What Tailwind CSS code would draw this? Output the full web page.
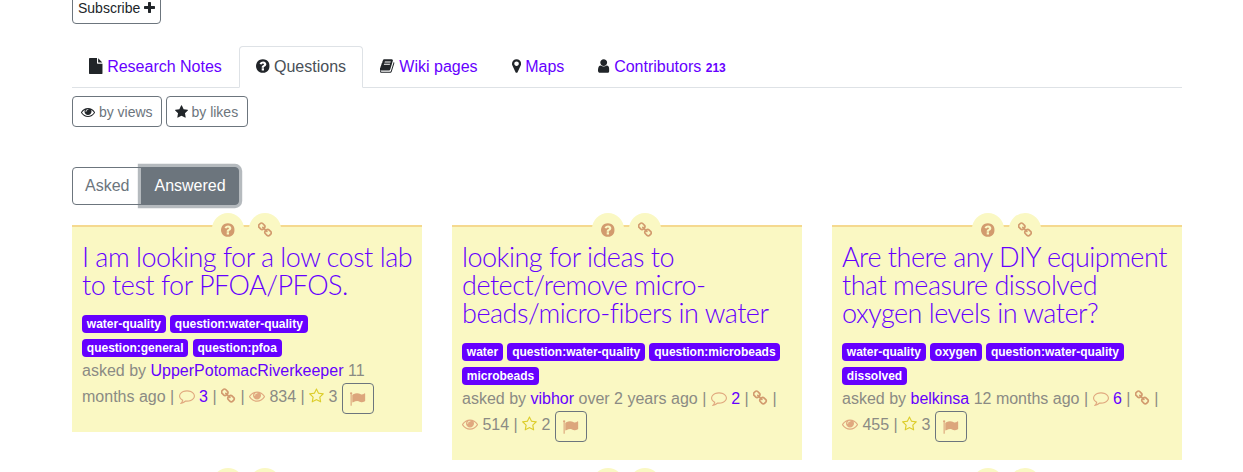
<!DOCTYPE html>
<html lang="en">
<head>
    <meta charset="UTF-8">
    <title>Questions</title>
    <script src="https://cdn.jsdelivr.net/npm/@tailwindcss/browser@4"></script>
</head>
<body class="h-[472px] overflow-hidden bg-white font-['Liberation_Sans',sans-serif] text-base leading-6 text-[#212529]">
    <svg class="hidden">
        <symbol id="i-plus" viewBox="192 0 1408 1792"><path d="M1600 736v192q0 40-28 68t-68 28h-416v416q0 40-28 68t-68 28h-192q-40 0-68-28t-28-68v-416h-416q-40 0-68-28t-28-68v-192q0-40 28-68t68-28h416v-416q0-40 28-68t68-28h192q40 0 68 28t28 68v416h416q40 0 68 28t28 68z"/></symbol>
        <symbol id="i-file" viewBox="128 0 1536 1792"><path d="M1152 512v-472q22 14 36 28l408 408q14 14 28 36h-472zm-128 32q0 40 28 68t68 28h544v1056q0 40-28 68t-68 28h-1344q-40 0-68-28t-28-68v-1600q0-40 28-68t68-28h800v544z"/></symbol>
        <symbol id="i-question" viewBox="128 0 1536 1792"><path d="M1024 1376v-192q0-14-9-23t-23-9h-192q-14 0-23 9t-9 23v192q0 14 9 23t23 9h192q14 0 23-9t9-23zm256-672q0-88-55.5-163t-138.5-116-170-41q-243 0-371 213-15 24 8 42l132 100q7 6 19 6 16 0 25-12 53-68 86-92 34-24 86-24 48 0 85.5 26t37.5 59q0 38-20 61t-68 45q-63 28-115.5 86.5t-52.5 125.5v36q0 14 9 23t23 9h192q14 0 23-9t9-23q0-19 21.5-49.5t54.5-49.5q32-18 49-28.5t46-35 44.5-48 28-60.5 12.5-81zm384 192q0 209-103 385.5t-279.5 279.5-385.5 103-385.5-103-279.5-279.5-103-385.5 103-385.5 279.5-279.5 385.5-103 385.5 103 279.5 279.5 103 385.5z"/></symbol>
        <symbol id="i-book" viewBox="64 0 1664 1792"><path d="M1639 478q40 57 18 129l-275 906q-19 64-76.5 107.5t-122.5 43.5h-923q-77 0-148.5-53.5t-99.5-131.5q-24-67-2-127 0-4 3-27t4-37q1-8-3-21.5t-3-19.5q2-11 8-21t16.5-23.5 16.5-23.5q23-38 45-91.5t30-91.5q3-10 .5-30t-.5-28q3-11 17-28t17-23q21-36 42-92t25-90q1-9-2.5-32t.5-28q4-13 22-30.5t22-22.5q19-26 42.5-84.5t27.5-96.5q1-8-3-25.5t-2-26.5q2-8 9-18t18-23 17-21q8-12 16.5-30.5t15-35 16-36 19.5-32 26.5-23.5 36-11.5 47.5 5.5l-1 3q38-9 51-9h761q74 0 114 56t18 130l-274 906q-36 119-71.5 153.5t-128.5 34.5h-869q-27 0-38 15-11 16-1 43 24 70 144 70h923q29 0 56-15.5t35-41.5l300-987q7-22 5-57 38 15 59 43zm-1064 2q-4 13 2 22.5t20 9.5h608q13 0 25.5-9.5t16.5-22.5l21-64q4-13-2-22.5t-20-9.5h-608q-13 0-25.5 9.5t-16.5 22.5zm-83 256q-4 13 2 22.5t20 9.5h608q13 0 25.5-9.5t16.5-22.5l21-64q4-13-2-22.5t-20-9.5h-608q-13 0-25.5 9.5t-16.5 22.5z"/></symbol>
        <symbol id="i-marker" viewBox="0 0 1024 1792"><path d="M768 640q0-106-75-181t-181-75-181 75-75 181 75 181 181 75 181-75 75-181zm256 0q0 109-33 179l-364 774q-16 33-47.5 52t-67.5 19-67.5-19-46.5-52l-365-774q-33-70-33-179 0-212 150-362t362-150 362 150 150 362z"/></symbol>
        <symbol id="i-user" viewBox="256 0 1280 1792"><path d="M1536 1399q0 109-62.5 187t-150.5 78h-854q-88 0-150.5-78t-62.5-187q0-85 8.5-160.5t31.5-152 58.5-131 94-89 134.5-34.5q131 128 313 128t313-128q76 0 134.5 34.5t94 89 58.5 131 31.5 152 8.5 160.5zm-256-887q0 159-112.5 271.5t-271.5 112.5-271.5-112.5-112.5-271.5 112.5-271.5 271.5-112.5 271.5 112.5 112.5 271.5z"/></symbol>
        <symbol id="i-eye" viewBox="0 0 1792 1792"><path d="M1664 960q-152-236-381-353 61 104 61 225 0 185-131.5 316.5t-316.5 131.5-316.5-131.5-131.5-316.5q0-121 61-225-229 117-381 353 133 205 333.5 326.5t434.5 121.5 434.5-121.5 333.5-326.5zm-720-384q0-20-14-34t-34-14q-125 0-214.5 89.5t-89.5 214.5q0 20 14 34t34 14 34-14 14-34q0-86 61-147t147-61q20 0 34-14t14-34zm848 384q0 34-20 69-140 230-376.5 368.5t-499.5 138.5-499.5-139-376.5-368q-20-35-20-69t20-69q140-229 376.5-368t499.5-139 499.5 139 376.5 368q20 35 20 69z"/></symbol>
        <symbol id="i-star" viewBox="64 0 1664 1792"><path d="M1728 647q0 22-26 48l-363 354 86 500q1 7 1 20 0 21-10.5 35.5t-30.5 14.5q-19 0-40-12l-449-236-449 236q-22 12-40 12-21 0-31.5-14.5t-10.5-35.5q0-6 2-20l86-500-364-354q-25-27-25-48 0-37 56-46l502-73 225-455q19-41 49-41t49 41l225 455 502 73q56 9 56 46z"/></symbol>
        <symbol id="i-star-o" viewBox="64 0 1664 1792"><path d="M1201 1004l306-297-422-62-189-382-189 382-422 62 306 297-73 421 378-199 377 199zm527-357q0 22-26 48l-363 354 86 500q1 7 1 20 0 50-41 50-19 0-40-12l-449-236-449 236q-22 12-40 12-21 0-31.5-14.5t-10.5-35.5q0-6 2-20l86-500-364-354q-25-27-25-48 0-37 56-46l502-73 225-455q19-41 49-41t49 41l225 455 502 73q56 9 56 46z"/></symbol>
        <symbol id="i-comment" viewBox="0 0 1792 1792"><path d="M896 384q-204 0-381.5 69.5t-282 187.5-104.5 255q0 112 71.5 213.5t201.5 175.5l87 50-27 96q-24 91-70 172 152-63 275-171l43-38 57 6q69 8 130 8 204 0 381.5-69.5t282-187.5 104.5-255-104.5-255-282-187.5-381.5-69.5zm896 512q0 174-120 321.5t-326 233-450 85.5q-70 0-145-8-198 175-460 242-49 14-114 22h-5q-15 0-27-10.5t-16-27.5v-1q-3-4-.5-12t2-10 4.5-9.5l6-9 7-8.5 8-9q7-8 31-34.5t34.5-38 31-39.5 32.5-51 27-59 26-76q-157-89-247.5-220t-90.5-281q0-174 120-321.5t326-233 450-85.5 450 85.5 326 233 120 321.5z"/></symbol>
        <symbol id="i-chain" viewBox="64 0 1664 1792"><path d="M1456 1216q0-40-28-68l-208-208q-28-28-68-28-42 0-72 32 3 3 19 18.5t21.5 21.5 15 19 13 25.5 3.5 27.5q0 40-28 68t-68 28q-15 0-27.5-3.5t-25.5-13-19-15-21.5-21.5-18.5-19q-33 31-33 73 0 40 28 68l206 207q27 27 68 27 40 0 68-26l147-146q28-28 28-67zm-703-705q0-40-28-68l-206-207q-28-28-68-28-39 0-68 27l-147 146q-28 28-28 67 0 40 28 68l208 208q27 27 68 27 42 0 72-31-3-3-19-18.5t-21.5-21.5-15-19-13-25.5-3.5-27.5q0-40 28-68t68-28q15 0 27.5 3.5t25.5 13 19 15 21.5 21.5 18.5 19q33-31 33-73zm895 705q0 120-85 203l-147 146q-83 83-203 83-121 0-204-85l-206-207q-83-83-83-203 0-123 88-209l-88-88q-86 88-208 88-120 0-204-84l-208-208q-84-84-84-204t85-203l147-146q83-83 203-83 121 0 204 85l206 207q83 83 83 203 0 123-88 209l88 88q86-88 208-88 120 0 204 84l208 208q84 84 84 204z"/></symbol>
        <symbol id="i-flag" viewBox="64 0 1728 1792"><path d="M320 256q0 72-64 110v1266q0 13-9.5 22.5t-22.5 9.5h-64q-13 0-22.5-9.5t-9.5-22.5v-1266q-64-38-64-110 0-53 37.5-90.5t90.5-37.5 90.5 37.5 37.5 90.5zm1472 64v763q0 25-12.5 38.5t-39.5 27.5q-215 116-369 116-61 0-123.5-22t-108.5-48-115.5-48-142.5-22q-192 0-464 146-17 9-33 9-26 0-45-19t-19-45v-742q0-32 31-55 21-14 79-43 236-120 421-120 107 0 200 29t219 88q38 19 88 19 54 0 117.5-21t110-47 88-47 54.5-21q26 0 45 19t19 45z"/></symbol>
    </svg>

    <div class="ml-[72px] w-[1110px]">
        <button class="mt-[-8px] block h-8 rounded border border-[#6c757d] px-[5px] text-sm">Subscribe <svg class="inline h-[14px] w-[11px] fill-current align-[-2px]"><use href="#i-plus"/></svg></button>

        <!-- tabs -->
        <nav class="mt-[22px] flex h-[42px] border-b border-[#dee2e6]">
            <a class="border border-transparent px-4 py-2 text-[#6600ff]"><svg class="inline h-4 w-[13.7px] fill-[#212529] align-[-2.3px]"><use href="#i-file"/></svg> Research Notes</a>
            <a class="h-[42px] rounded-t border border-[#dee2e6] border-b-white bg-white px-4 py-2 text-[#495057]"><svg class="inline h-4 w-[13.7px] fill-[#212529] align-[-2.3px]"><use href="#i-question"/></svg> Questions</a>
            <a class="border border-transparent px-4 py-2 text-[#6600ff]"><svg class="inline h-4 w-[14.9px] fill-[#212529] align-[-2.3px]"><use href="#i-book"/></svg> Wiki pages</a>
            <a class="border border-transparent px-4 py-2 text-[#6600ff]"><svg class="inline h-4 w-[9.1px] fill-[#212529] align-[-2.3px]"><use href="#i-marker"/></svg> Maps</a>
            <a class="border border-transparent px-4 py-2 text-[#6600ff]"><svg class="inline h-4 w-[11.4px] fill-[#212529] align-[-2.3px]"><use href="#i-user"/></svg> Contributors <span class="text-xs font-bold">213</span></a>
        </nav>

        <div class="mt-2 flex gap-1">
            <button class="h-[31px] rounded border border-[#6c757d] px-2 text-sm text-[#6c757d]"><svg class="inline h-[14px] w-[14px] fill-[#212529] align-[-2px]"><use href="#i-eye"/></svg> by views</button>
            <button class="h-[31px] rounded border border-[#6c757d] pl-2 pr-[9px] text-sm text-[#6c757d]"><svg class="inline h-[14px] w-[13px] fill-[#212529] align-[-2px]"><use href="#i-star"/></svg> by likes</button>
        </div>

        <div class="mt-10 flex">
            <button class="h-[38px] rounded-l border border-[#6c757d] px-3 text-[#6c757d]">Asked</button>
            <button class="ml-[-1px] h-[38px] rounded-r border border-[#6c757d] bg-[#6c757d] px-3 text-white shadow-[0_0_0_3.2px_rgba(108,117,125,0.5)]">Answered</button>
        </div>

        <div class="mt-5 grid grid-cols-3 items-start gap-x-[30px] gap-y-5">
            <div class="relative border-t-2 border-[#f5d98f] bg-[#faf8c3] px-[10px] pb-[18px] pt-[16px] text-[#8b8b84]">
                <div class="absolute left-[140px] top-[-14px] flex gap-[5px]">
                    <span class="flex h-8 w-8 items-center justify-center rounded-full bg-[#faf8c3] pt-[2px]"><svg class="h-4 w-[13.7px] fill-[#d29b6e]"><use href="#i-question"/></svg></span>
                    <span class="flex h-8 w-8 items-center justify-center rounded-full bg-[#faf8c3] pt-[2px]"><svg class="h-4 w-[14.9px] fill-[#d29b6e]"><use href="#i-chain"/></svg></span>
                </div>
                <h3 class="mb-3 mr-[-4px] font-['Lato',sans-serif] text-[27px] font-light leading-7 tracking-[-0.5px] text-[#6600ff]">I am looking for a low cost lab to test for PFOA/PFOS.</h3>
                <p>
                    <a class="inline-block rounded bg-[#6600ff] px-[4.8px] py-[3px] text-xs font-bold leading-3 text-white">water-quality</a>
                    <a class="inline-block rounded bg-[#6600ff] px-[4.8px] py-[3px] text-xs font-bold leading-3 text-white">question:water-quality</a>
                    <a class="inline-block rounded bg-[#6600ff] px-[4.8px] py-[3px] text-xs font-bold leading-3 text-white">question:general</a>
                    <a class="inline-block rounded bg-[#6600ff] px-[4.8px] py-[3px] text-xs font-bold leading-3 text-white">question:pfoa</a>
                </p>
                <p>asked by <a class="text-[#6600ff]">UpperPotomacRiverkeeper</a> 11 months ago | <svg class="inline h-4 w-4 fill-[#e0a97f] align-[-2.3px]"><use href="#i-comment"/></svg> <a class="text-[#6600ff]">3</a> | <svg class="inline h-4 w-[14.9px] fill-[#d29b6e] align-[-2.3px]"><use href="#i-chain"/></svg> | <svg class="inline h-4 w-4 fill-[#e0a97f] align-[-2.3px]"><use href="#i-eye"/></svg> 834 | <svg class="inline h-4 w-[14.9px] fill-[#dccd2a] align-[-2.3px]"><use href="#i-star-o"/></svg> 3 <button class="inline-block h-[31px] w-8 rounded border border-[#6c757d] align-[-11px]"><svg class="mx-auto h-4 w-[15.4px] fill-[#dca67c]"><use href="#i-flag"/></svg></button></p>
            </div>

            <div class="relative border-t-2 border-[#f5d98f] bg-[#faf8c3] px-[10px] pb-[18px] pt-[16px] text-[#8b8b84]">
                <div class="absolute left-[140px] top-[-14px] flex gap-[5px]">
                    <span class="flex h-8 w-8 items-center justify-center rounded-full bg-[#faf8c3] pt-[2px]"><svg class="h-4 w-[13.7px] fill-[#d29b6e]"><use href="#i-question"/></svg></span>
                    <span class="flex h-8 w-8 items-center justify-center rounded-full bg-[#faf8c3] pt-[2px]"><svg class="h-4 w-[14.9px] fill-[#d29b6e]"><use href="#i-chain"/></svg></span>
                </div>
                <h3 class="mb-3 mr-[-4px] font-['Lato',sans-serif] text-[27px] font-light leading-7 tracking-[-0.5px] text-[#6600ff]">looking for ideas to detect/remove micro-beads/micro-fibers in water</h3>
                <p>
                    <a class="inline-block rounded bg-[#6600ff] px-[4.8px] py-[3px] text-xs font-bold leading-3 text-white">water</a>
                    <a class="inline-block rounded bg-[#6600ff] px-[4.8px] py-[3px] text-xs font-bold leading-3 text-white">question:water-quality</a>
                    <a class="inline-block rounded bg-[#6600ff] px-[4.8px] py-[3px] text-xs font-bold leading-3 text-white">question:microbeads</a>
                    <a class="inline-block rounded bg-[#6600ff] px-[4.8px] py-[3px] text-xs font-bold leading-3 text-white">microbeads</a>
                </p>
                <p>asked by <a class="text-[#6600ff]">vibhor</a> over 2 years ago | <svg class="inline h-4 w-4 fill-[#e0a97f] align-[-2.3px]"><use href="#i-comment"/></svg> <a class="text-[#6600ff]">2</a> | <svg class="inline h-4 w-[14.9px] fill-[#d29b6e] align-[-2.3px]"><use href="#i-chain"/></svg> | <svg class="inline h-4 w-4 fill-[#e0a97f] align-[-2.3px]"><use href="#i-eye"/></svg> 514 | <svg class="inline h-4 w-[14.9px] fill-[#dccd2a] align-[-2.3px]"><use href="#i-star-o"/></svg> 2 <button class="inline-block h-[31px] w-8 rounded border border-[#6c757d] align-[-11px]"><svg class="mx-auto h-4 w-[15.4px] fill-[#dca67c]"><use href="#i-flag"/></svg></button></p>
            </div>

            <div class="relative border-t-2 border-[#f5d98f] bg-[#faf8c3] px-[10px] pb-[18px] pt-[16px] text-[#8b8b84]">
                <div class="absolute left-[140px] top-[-14px] flex gap-[5px]">
                    <span class="flex h-8 w-8 items-center justify-center rounded-full bg-[#faf8c3] pt-[2px]"><svg class="h-4 w-[13.7px] fill-[#d29b6e]"><use href="#i-question"/></svg></span>
                    <span class="flex h-8 w-8 items-center justify-center rounded-full bg-[#faf8c3] pt-[2px]"><svg class="h-4 w-[14.9px] fill-[#d29b6e]"><use href="#i-chain"/></svg></span>
                </div>
                <h3 class="mb-3 mr-[-4px] font-['Lato',sans-serif] text-[27px] font-light leading-7 tracking-[-0.5px] text-[#6600ff]">Are there any DIY equipment that measure dissolved oxygen levels in water?</h3>
                <p>
                    <a class="inline-block rounded bg-[#6600ff] px-[4.8px] py-[3px] text-xs font-bold leading-3 text-white">water-quality</a>
                    <a class="inline-block rounded bg-[#6600ff] px-[4.8px] py-[3px] text-xs font-bold leading-3 text-white">oxygen</a>
                    <a class="inline-block rounded bg-[#6600ff] px-[4.8px] py-[3px] text-xs font-bold leading-3 text-white">question:water-quality</a>
                    <a class="inline-block rounded bg-[#6600ff] px-[4.8px] py-[3px] text-xs font-bold leading-3 text-white">dissolved</a>
                </p>
                <p>asked by <a class="text-[#6600ff]">belkinsa</a> 12 months ago | <svg class="inline h-4 w-4 fill-[#e0a97f] align-[-2.3px]"><use href="#i-comment"/></svg> <a class="text-[#6600ff]">6</a> | <svg class="inline h-4 w-[14.9px] fill-[#d29b6e] align-[-2.3px]"><use href="#i-chain"/></svg> | <svg class="inline h-4 w-4 fill-[#e0a97f] align-[-2.3px]"><use href="#i-eye"/></svg> 455 | <svg class="inline h-4 w-[14.9px] fill-[#dccd2a] align-[-2.3px]"><use href="#i-star-o"/></svg> 3 <button class="inline-block h-[31px] w-8 rounded border border-[#6c757d] align-[-11px]"><svg class="mx-auto h-4 w-[15.4px] fill-[#dca67c]"><use href="#i-flag"/></svg></button></p>
            </div>

            <!-- next row, only the top shows -->
            <div class="relative h-20 border-t-2 border-[#f5d98f] bg-[#faf8c3]">
                <div class="absolute left-[140px] top-[-14px] flex gap-[5px]">
                    <span class="h-8 w-8 rounded-full bg-[#faf8c3]"></span>
                    <span class="h-8 w-8 rounded-full bg-[#faf8c3]"></span>
                </div>
            </div>
            <div class="relative h-20 border-t-2 border-[#f5d98f] bg-[#faf8c3]">
                <div class="absolute left-[140px] top-[-14px] flex gap-[5px]">
                    <span class="h-8 w-8 rounded-full bg-[#faf8c3]"></span>
                    <span class="h-8 w-8 rounded-full bg-[#faf8c3]"></span>
                </div>
            </div>
            <div class="relative h-20 border-t-2 border-[#f5d98f] bg-[#faf8c3]">
                <div class="absolute left-[140px] top-[-14px] flex gap-[5px]">
                    <span class="h-8 w-8 rounded-full bg-[#faf8c3]"></span>
                    <span class="h-8 w-8 rounded-full bg-[#faf8c3]"></span>
                </div>
            </div>
        </div>
    </div>
</body>
</html>
